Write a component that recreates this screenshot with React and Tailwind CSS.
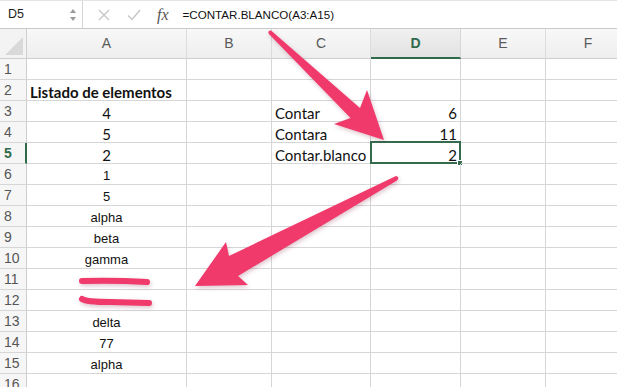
import React from "react";

const COLS = ["A", "B", "C", "D", "E", "F"];

const CAL = "font-['Lato','Noto_Sans',sans-serif] text-[15px] text-[#111]";
const ARI = "font-['Liberation_Sans',Arial,sans-serif] text-[13px] text-[#111]";

// each row: [A, B, C, D] with a style hint
const rows = [
  { n: 1 },
  { n: 2, a: "Listado de elementos", aBold: true },
  { n: 3, a: "4", c: "Contar", d: "6", cal: true },
  { n: 4, a: "5", c: "Contara", d: "11", cal: true },
  { n: 5, a: "2", c: "Contar.blanco", d: "2", cal: true, sel: true },
  { n: 6, a: "1" },
  { n: 7, a: "5" },
  { n: 8, a: "alpha" },
  { n: 9, a: "beta" },
  { n: 10, a: "gamma" },
  { n: 11 },
  { n: 12 },
  { n: 13, a: "delta" },
  { n: 14, a: "77" },
  { n: 15, a: "alpha" },
  { n: 16 },
];

function FormulaBar() {
  return (
    <div className="flex h-[29px] items-center border-t border-b border-t-[#e4e4e4] border-b-[#c9c9c9] bg-white">
      <div className="flex h-full w-[83px] items-center justify-between border-r border-[#d6d6d6] pl-[8px] pr-[5px]">
        <span className="font-['Liberation_Sans',Arial,sans-serif] text-[12.5px] text-[#222]">D5</span>
        <svg width="8" height="14" viewBox="0 0 8 14">
          <path d="M4 1 L7 5 L1 5 Z" fill="#9a9a9a" />
          <path d="M4 13 L7 9 L1 9 Z" fill="#9a9a9a" />
        </svg>
      </div>
      <div className="flex h-full items-center">
        <svg className="ml-[15px]" width="12" height="12" viewBox="0 0 12 12">
          <path d="M1 1 L11 11 M11 1 L1 11" stroke="#c6c6c6" strokeWidth="1.4" fill="none" />
        </svg>
        <svg className="ml-[17px]" width="14" height="12" viewBox="0 0 14 12">
          <path d="M1 6.5 L5 10.5 L13 1" stroke="#c6c6c6" strokeWidth="1.4" fill="none" />
        </svg>
        <span className="ml-[16px] font-['Liberation_Serif',serif] text-[16px] italic text-[#555]">fx</span>
      </div>
      <div className="ml-[14px] font-['Liberation_Sans',Arial,sans-serif] text-[11.6px] text-[#111]">
        =CONTAR.BLANCO(A3:A15)
      </div>
    </div>
  );
}

function HeaderRow() {
  return (
    <>
      <div className="relative h-[30px] border-r border-b border-[#cfcfcf] bg-[#f3f3f3]">
        <svg className="absolute right-[3px] bottom-[3px]" width="18" height="18" viewBox="0 0 18 18">
          <path d="M18 0 L18 18 L0 18 Z" fill="#d9d9d9" />
        </svg>
      </div>
      {COLS.map((c) =>
        c === "D" ? (
          <div
            key={c}
            className="flex h-[30px] items-center justify-center border-r border-b-2 border-r-[#d6d6d6] border-b-[#2f6b4b] bg-gradient-to-b from-[#f0f0f0] to-[#e2e2e2] font-['Liberation_Sans',Arial,sans-serif] text-[14px] font-bold text-[#2f6b4b]"
          >
            {c}
          </div>
        ) : (
          <div
            key={c}
            className="flex h-[30px] items-center justify-center border-r border-b border-r-[#dcdcdc] border-b-[#cfcfcf] bg-gradient-to-b from-[#f8f8f8] to-[#eeeeee] font-['Liberation_Sans',Arial,sans-serif] text-[14px] text-[#5a5a5a]"
          >
            {c}
          </div>
        )
      )}
    </>
  );
}

function Cell({ children, className = "", extra = null }) {
  return (
    <div className={"relative h-[21px] overflow-visible whitespace-nowrap border-r border-b border-[#d6d6d6] leading-[20px] " + className}>
      {children}
      {extra}
    </div>
  );
}

function Row({ r }) {
  const font = r.cal || r.aBold ? CAL : ARI;
  return (
    <>
      <div
        className={
          "h-[21px] border-b border-[#d6d6d6] bg-[#f6f6f6] pl-[4px] font-['Liberation_Sans',Arial,sans-serif] text-[14px] leading-[21px] " +
          (r.sel ? "border-r-2 border-r-[#2f6b4b] font-bold text-[#2f6b4b]" : "border-r border-r-[#cdcdcd] text-[#555]")
        }
      >
        {r.n}
      </div>
      <Cell className={font + (r.aBold ? " pl-[3px] pt-[2px] text-left font-bold" : " pt-[2px] text-center")}>{r.a}</Cell>
      <Cell />
      <Cell className={CAL + " pl-[3px] pt-[2px]"}>{r.c}</Cell>
      <Cell
        className={CAL + " pr-[3px] pt-[2px] text-right"}
        extra={
          r.sel ? (
            <>
              <div className="absolute -top-[2px] -left-[1px] -right-[1px] -bottom-[1px] border-2 border-[#336b4c]" />
              <div className="absolute -right-[3px] -bottom-[3px] h-[6px] w-[6px] border border-white bg-[#336b4c]" />
            </>
          ) : null
        }
      >
        {r.d}
      </Cell>
      <Cell />
      <Cell />
    </>
  );
}

function Arrows() {
  return (
    <svg
      className="pointer-events-none absolute top-0 left-0"
      width="617"
      height="387"
      viewBox="0 0 617 387"
      style={{ filter: "drop-shadow(1px 2px 2px rgba(120,20,50,0.25))" }}
    >
      <path
        d="M271 30.5 L360 108 L367 90 L384 140 L334 124 L350.5 118 L268.5 33.5 Q268 30 271 30.5 Z"
        fill="#f03a6c"
      />
      <path
        d="M396 176 L229 256 L226 242 L195 286 L248 285 L238 276 L397 180.5 Q400 177 396 176 Z"
        fill="#f03a6c"
      />
      <path d="M82 281 Q114 280 147 282" stroke="#f03a6c" strokeWidth="6" strokeLinecap="round" fill="none" />
      <path d="M82 299 Q86 302 110 302 L149 303" stroke="#f03a6c" strokeWidth="6" strokeLinecap="round" fill="none" />
    </svg>
  );
}

export default function App() {
  return (
    <div className="relative h-[387px] w-[617px] overflow-hidden bg-white">
      <FormulaBar />
      <div className="grid grid-cols-[27px_160px_85px_99px_90px_85px_85px]">
        <HeaderRow />
        {rows.map((r) => (
          <Row key={r.n} r={r} />
        ))}
      </div>
      <Arrows />
    </div>
  );
}
